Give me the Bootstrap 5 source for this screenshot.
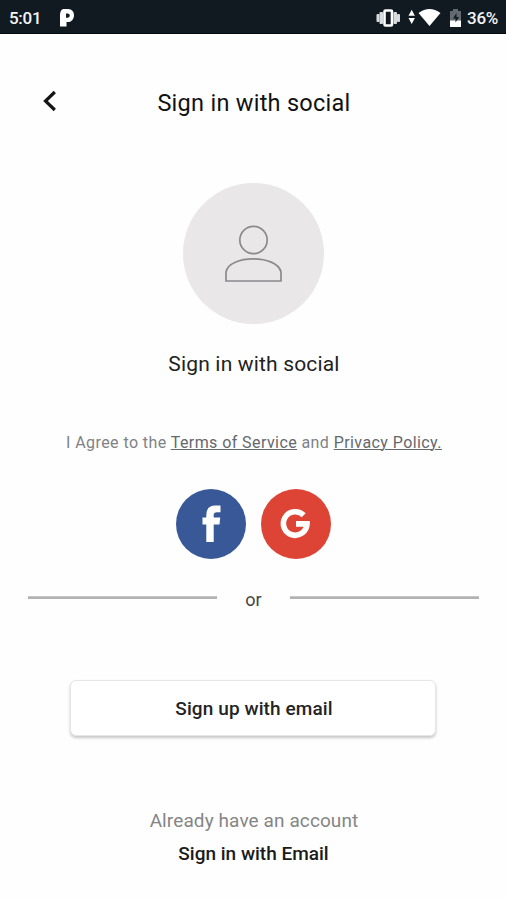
<!DOCTYPE html>
<html lang="en">
<head>
<meta charset="utf-8">
<meta name="viewport" content="width=device-width, initial-scale=1">
<title>Sign in with social</title>
<link href="https://cdn.jsdelivr.net/npm/bootstrap@5.3.0/dist/css/bootstrap.min.css" rel="stylesheet">
<style>
body{font-family:Roboto,"Liberation Sans",sans-serif;color:#222;background:#fefefe;height:900px;overflow:hidden}
.status-bar{height:34px;background:#111a21;color:#f4f4f4;font-size:17px;font-weight:500;line-height:34px;padding:2px 8px 0 9px;border-bottom:1px solid #05090c}
.status-bar svg,.social svg,.avatar svg,.back svg{display:block}
.clock{width:49px;letter-spacing:-.3px}
.percent{letter-spacing:-.3px}
.app-head{height:136px;display:grid;grid-template-columns:100px 1fr 100px;align-items:center;padding-top:2px}
.back{padding:0 0 5px 42px;border:0;background:none}
.app-head h1{font-size:23.5px;font-weight:400;color:#111;letter-spacing:.27px;padding-left:2px}
.avatar{width:141px;height:141px;background:#e9e7e8;margin-top:13px}
.caption{font-size:21px;line-height:30px;margin-top:25px;letter-spacing:.17px;padding-left:2px}
.terms{font-size:16px;line-height:24px;margin-top:52px;color:#808285;letter-spacing:.42px;padding-left:2px}
.terms a{color:#65686c;text-underline-offset:1px;text-decoration-thickness:1px}
.socials{margin-top:34px;gap:15px}
.social{width:70px;height:70px;border:0;padding:0}
.fb{background:#385898}.gg{background:#dd4435}
.divider{height:30px;margin:25px 27px 0 28px;font-size:18px;color:#444}
.rule{height:3px;width:189px;background:#b2b2b2;border-top:1px solid #c6c6c6;margin-bottom:3px}
.email-btn{width:366px;height:56px;margin:66px auto 0;padding:8px 0 6px 2px;font-size:19px;font-weight:500;color:#242424;letter-spacing:.1px;background:#fff;border:1px solid #e6e6e6;border-radius:6px;box-shadow:0 2px 3px rgba(0,0,0,.22)}
.already{margin-top:70px;font-size:19px;line-height:30px;color:#858585;letter-spacing:.1px;padding-left:2px}
.signin{font-size:19px;line-height:30px;margin-top:3px;color:#1b1b1b;font-weight:500;padding-left:1px}
.t{display:inline-block;white-space:nowrap}
</style>
</head>
<body class="d-flex flex-column">
<header class="status-bar d-flex align-items-center flex-shrink-0">
  <span class="clock">5:01</span>
  <svg width="18" height="20" viewBox="0 0 18 20"><path fill="#fff" fill-rule="evenodd" d="M5.500 1H10c8.500 0 7.500 13 0 13H8.500v4.500H2V9.500Q1.500 1.500 5.500 1zM8 5.500v4.200h1.500c3 0 3-4.200 0-4.200z"/></svg>
  <div class="ms-auto d-flex align-items-center">
    <svg width="92" height="24" viewBox="0 0 92 24">
      <g fill="#d9dcde"><rect x="1.500" y="8" width="3" height="8" rx="1"/><rect x="4.500" y="6" width="3.500" height="12" rx="1"/><rect x="18.500" y="6" width="3.500" height="12" rx="1"/><rect x="22" y="8" width="3" height="8" rx="1"/></g>
      <rect x="9.500" y="4.500" width="7.500" height="15" fill="none" stroke="#fff" stroke-width="2.600" rx="1"/>
      <path fill="#fff" d="M33.500 9.800l3.200-6 3.200 6zM33.500 12l3.200 6 3.200-6zM43.500 7Q54.500-1 65.500 7L54.500 20z"/>
      <path fill="#646b70" d="M75 5h3V3h5v2h3v10H75z"/><path fill="#fff" d="M75 14.500h11V21H75z"/><path fill="#111a21" d="M81.500 7L78 12.500h2.500v4l3.500-5.500h-2.500z"/>
    </svg>
    <span class="percent t">36%</span>
  </div>
</header>
<main class="d-flex flex-column">
  <div class="app-head">
    <button class="back" aria-label="Back"><svg width="16" height="22" viewBox="0 0 16 22"><path d="M12.800 2L3.500 11l9.300 9" fill="none" stroke="#151515" stroke-width="3.200"/></svg></button>
    <h1 class="m-0 text-center"><span class="t">Sign in with social</span></h1>
  </div>
  <div class="avatar rounded-circle mx-auto d-flex align-items-center justify-content-center">
    <svg width="60" height="60" viewBox="0 0 60 60" fill="none" stroke="#8b898a" stroke-width="1.700"><circle cx="30.500" cy="16" r="13.700"/><path d="M3 57v-9C6 30.500 54 30.500 58 48v9z"/></svg>
  </div>
  <div class="caption text-center"><span class="t">Sign in with social</span></div>
  <div class="terms text-center"><span class="t">I Agree to the <a href="#">Terms of Service</a> and <a href="#">Privacy Policy.</a></span></div>
  <div class="socials d-flex justify-content-center">
    <button class="social fb rounded-circle" aria-label="Facebook"><svg width="70" height="70" viewBox="0 0 70 70"><path fill="#fff" d="M30.300 53V35.500H26.500v-7h3.800V26q0-9.500 9-9.500H44.500v6.800H41q-3.300 0-3.300 2.700v2.500h6.500l-.7 7h-5.800V53z"/></svg></button>
    <button class="social gg rounded-circle" aria-label="Google"><svg width="70" height="70" viewBox="0 0 70 70"><path fill="none" stroke="#fff" stroke-width="5.600" d="M42.700 26.300A11.800 11.800 0 1 0 46 34.900H35"/></svg></button>
  </div>
  <div class="divider d-flex align-items-center justify-content-between"><div class="rule"></div><span class="t">or</span><div class="rule"></div></div>
  <button class="email-btn btn"><span class="t">Sign up with email</span></button>
  <div class="already text-center"><span class="t">Already have an account</span></div>
  <div class="signin text-center"><span class="t">Sign in with Email</span></div>
</main>
<script src="https://cdn.jsdelivr.net/npm/bootstrap@5.3.0/dist/js/bootstrap.bundle.min.js"></script>
</body>
</html>
